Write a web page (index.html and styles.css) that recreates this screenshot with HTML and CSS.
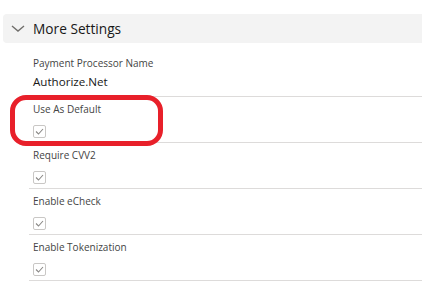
FILE: index.html
```html
<!DOCTYPE html>
<html lang="en">
<head>
    <meta charset="UTF-8">
    <title>More Settings</title>
    <link rel="stylesheet" href="styles.css">
</head>
<body>
    <div class="section">
        <div class="section-header">
            <svg class="chevron" width="14" height="7" viewBox="0 0 14 7">
                <polyline points="1,1 7,6 13,1" fill="none" stroke="#706e6b" stroke-width="1.4"/>
            </svg>
            <span class="section-title">More Settings</span>
        </div>
        <div class="fields">
            <div class="field field-text">
                <div class="field-label">Payment Processor Name</div>
                <div class="field-value">Authorize.Net</div>
            </div>
            <div class="field highlighted">
                <div class="field-label">Use As Default</div>
                <span class="checkbox"><svg width="9" height="7" viewBox="0 0 9 7"><polyline points="1,3.5 3.5,6 8,1" fill="none" stroke="#8a8886" stroke-width="1.1"/></svg></span>
                <div class="callout"></div>
            </div>
            <div class="field">
                <div class="field-label">Require CVV2</div>
                <span class="checkbox"><svg width="9" height="7" viewBox="0 0 9 7"><polyline points="1,3.5 3.5,6 8,1" fill="none" stroke="#8a8886" stroke-width="1.1"/></svg></span>
            </div>
            <div class="field">
                <div class="field-label">Enable eCheck</div>
                <span class="checkbox"><svg width="9" height="7" viewBox="0 0 9 7"><polyline points="1,3.5 3.5,6 8,1" fill="none" stroke="#8a8886" stroke-width="1.1"/></svg></span>
            </div>
            <div class="field">
                <div class="field-label">Enable Tokenization</div>
                <span class="checkbox"><svg width="9" height="7" viewBox="0 0 9 7"><polyline points="1,3.5 3.5,6 8,1" fill="none" stroke="#8a8886" stroke-width="1.1"/></svg></span>
            </div>
        </div>
    </div>
</body>
</html>
```

FILE: styles.css
```css
body {
    font-family: 'Open Sans', 'Noto Sans', sans-serif;
    background-color: #ffffff;
    color: #181818;
    margin: 0;
    padding: 0;
}
.section {
    padding-top: 14px;
    padding-left: 3px;
}
.section-header {
    display: flex;
    align-items: center;
    height: 29px;
    background-color: #f3f3f3;
    border-radius: 4px 0 0 4px;
    padding-left: 8px;
}
.chevron {
    margin-right: 8px;
}
.section-title {
    font-size: 13.7px;
    color: #181818;
}
.fields {
    padding-left: 26px;
}
.field {
    position: relative;
    padding: 3px 0 4px 4px;
    border-bottom: 1px solid #dddbda;
}
.field-text {
    padding-top: 11px;
}
.field-label {
    font-size: 10px;
    line-height: 18px;
    color: #444444;
}
.field-value {
    font-size: 11.6px;
    line-height: 20px;
    color: #181818;
}
.checkbox {
    display: flex;
    align-items: center;
    justify-content: center;
    width: 11px;
    height: 11px;
    margin-top: 7px;
    border: 1px solid #c9c7c5;
    border-radius: 2px;
}
.callout {
    position: absolute;
    left: -19px;
    top: -2px;
    width: 143px;
    height: 41px;
    border: 5px solid #e8202a;
    border-radius: 16px;
}
```
